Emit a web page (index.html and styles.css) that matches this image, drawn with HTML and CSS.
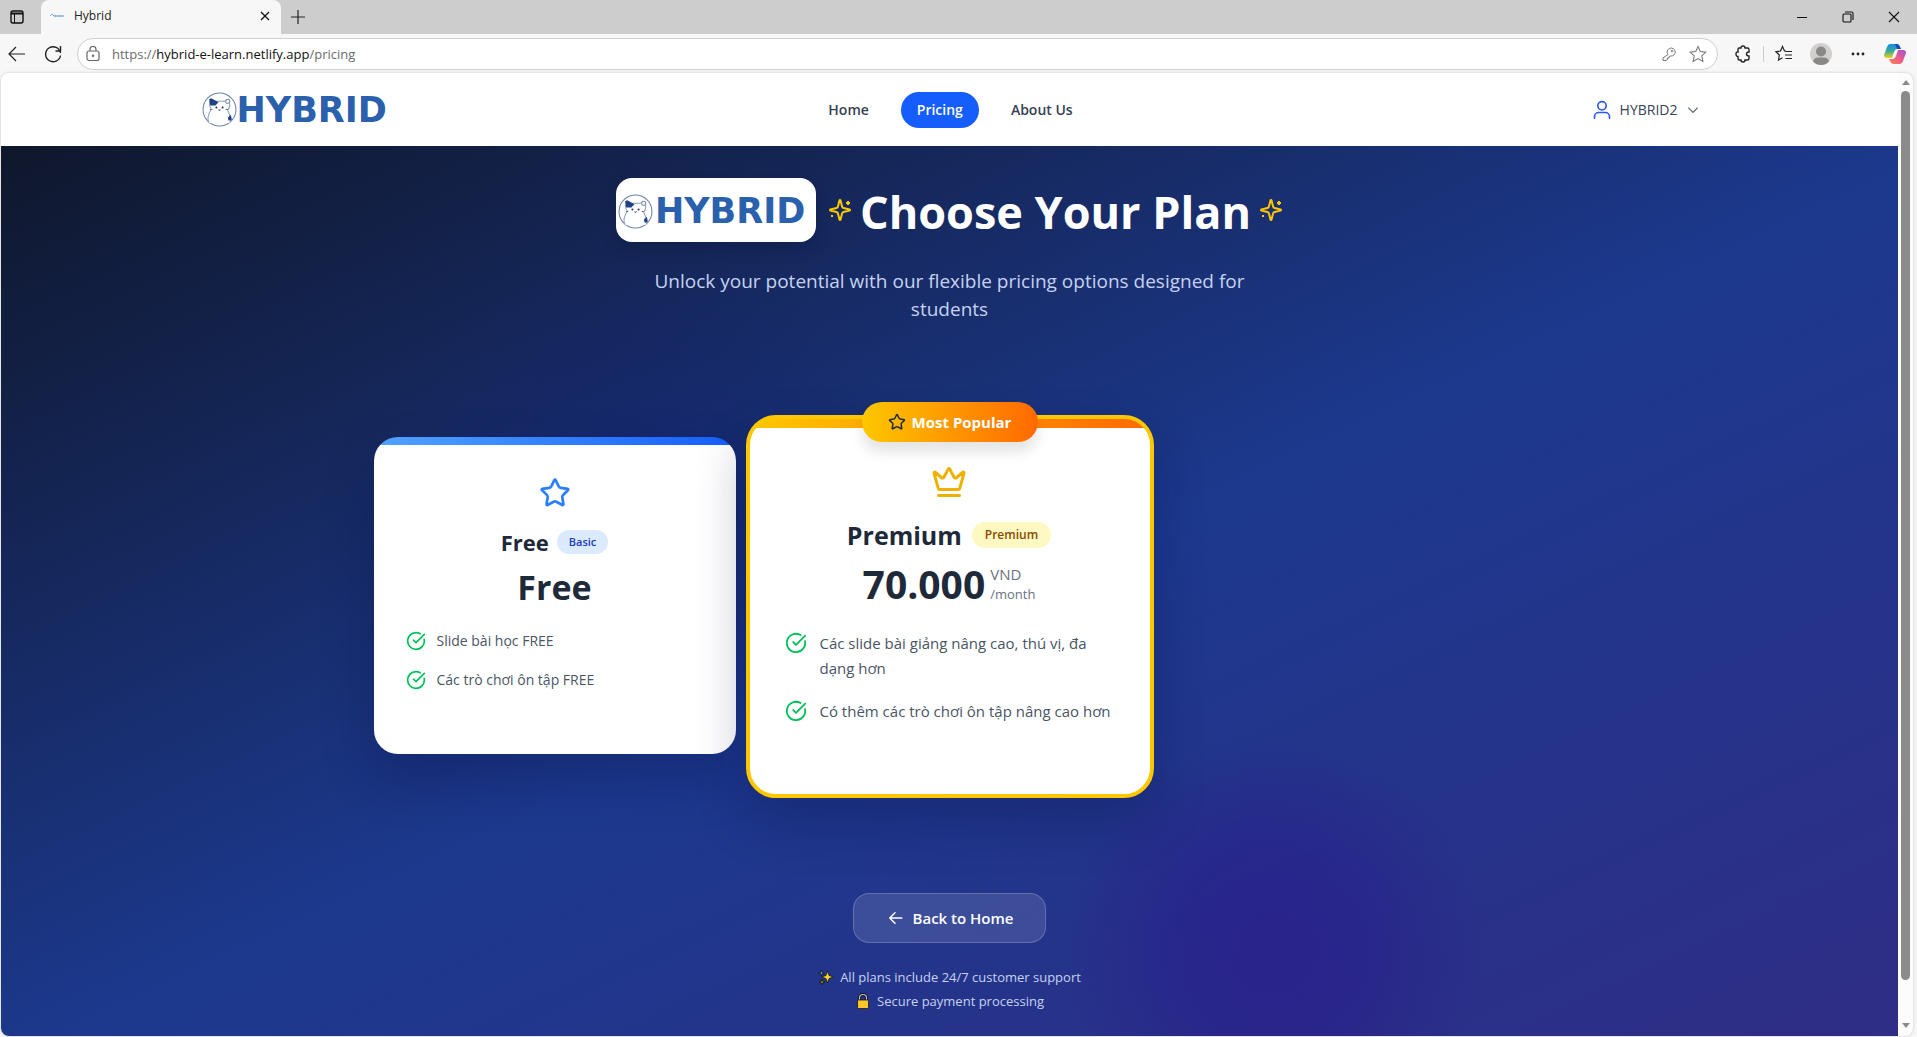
FILE: index.html
```html
<!DOCTYPE html>
<html lang="en">
<head>
<meta charset="utf-8">
<meta name="viewport" content="width=device-width, initial-scale=1">
<title>Hybrid</title>
<link rel="stylesheet" href="styles.css">
</head>
<body>
<svg class="sprite" aria-hidden="true">
  <symbol id="cat" viewBox="0 0 34 34">
    <circle cx="17" cy="17" r="16" fill="#fff" stroke="#6d82a8" stroke-width="1"/>
    <path d="M7 30C4 25 7 20 9 17C7 14 7 11 8 8L11 9H21L25 8C28 11 27 15 25 18C27 22 29 27 27 30" fill="#fff" stroke="#8b9bb8" stroke-width="1"/>
    <path d="M7 7L9 6L16 10L13 13L8 13Z" fill="#1d4287"/>
    <path d="M25 25L28 22L29 27L26 28Z" fill="#1d4287"/>
    <circle cx="25" cy="9" r="2" fill="#fff" stroke="#7e8ca5"/>
    <circle cx="14" cy="15" r="1" fill="#26344d"/><circle cx="20" cy="15" r="1" fill="#26344d"/>
    <path d="M16 17L17 18L18 17M8 17H10M23 17H25" fill="none" stroke="#5a6a86"/>
  </symbol>
  <symbol id="star" viewBox="0 0 24 24"><path d="M11.5 2.3a.53.53 0 0 1 .95 0l2.31 4.68a2.12 2.12 0 0 0 1.6 1.16l5.16.76a.53.53 0 0 1 .3.9l-3.74 3.64a2.12 2.12 0 0 0-.61 1.88l.88 5.14a.53.53 0 0 1-.77.56l-4.62-2.43a2.12 2.12 0 0 0-1.97 0L6.4 21.01a.53.53 0 0 1-.77-.56l.88-5.14a2.12 2.12 0 0 0-.61-1.88L2.16 9.8a.53.53 0 0 1 .3-.91l5.16-.75a2.12 2.12 0 0 0 1.6-1.16z"/></symbol>
  <symbol id="check" viewBox="0 0 24 24"><path d="M21.8 10A10 10 0 1 1 17 3.34"/><path d="m9 11 3 3L22 4"/></symbol>
  <symbol id="sparkles" viewBox="0 0 24 24"><path d="M9.94 15.5A2 2 0 0 0 8.5 14.06l-6.14-1.58a.5.5 0 0 1 0-.96L8.5 9.94A2 2 0 0 0 9.94 8.5l1.58-6.14a.5.5 0 0 1 .96 0l1.58 6.14a2 2 0 0 0 1.44 1.44l6.14 1.58a.5.5 0 0 1 0 .96l-6.14 1.58a2 2 0 0 0-1.44 1.44l-1.58 6.14a.5.5 0 0 1-.96 0z"/><path d="M20 3v4M22 5h-4M4 17v2M5 18H3"/></symbol>
</svg>

<div class="browser">
  <div class="tabstrip">
    <button class="icon-btn" aria-label="Tab actions"><svg width="16" height="16" viewBox="0 0 16 16"><rect x="2" y="2" width="12" height="12" rx="2" fill="none" stroke="#111" stroke-width="1.4"/><path d="M2 3.5H14V5.5H2Z" fill="#111"/><path d="M5.5 5V14" stroke="#111"/></svg></button>
    <div class="tab">
      <svg width="16" height="16" viewBox="0 0 16 16"><path d="M1 8L3 6L5 8" fill="none" stroke="#86aed8"/><path d="M5 8H15" stroke="#8ab2da" stroke-width="2" stroke-dasharray="2 .4"/></svg>
      <span class="tab-title">Hybrid</span>
      <button class="icon-btn" aria-label="Close tab"><svg width="10" height="10" viewBox="0 0 10 10"><path d="M1 1L9 9M9 1L1 9" stroke="#111" stroke-width="1.3"/></svg></button>
    </div>
    <button class="icon-btn new-tab" aria-label="New tab"><svg width="14" height="14" viewBox="0 0 14 14"><path d="M7 0V14M0 7H14" stroke="#222" stroke-width="1.2"/></svg></button>
    <div class="window-btns">
      <button class="icon-btn" aria-label="Minimize"><svg width="12" height="12" viewBox="0 0 12 12"><path d="M1 6.5H11" stroke="#111"/></svg></button>
      <button class="icon-btn" aria-label="Restore"><svg width="12" height="12" viewBox="0 0 12 12" fill="none" stroke="#111" stroke-width="1.1"><rect x="1" y="3" width="8" height="8" rx="1"/><path d="M3 1H9.5Q11 1 11 2.500V9"/></svg></button>
      <button class="icon-btn" aria-label="Close"><svg width="12" height="12" viewBox="0 0 12 12"><path d="M1 1L11 11M11 1L1 11" stroke="#111" stroke-width="1.1"/></svg></button>
    </div>
  </div>

  <div class="toolbar">
    <button class="icon-btn" aria-label="Back"><svg width="18" height="18" viewBox="0 0 18 18" fill="none" stroke="#222" stroke-width="1.2"><path d="M17 9H1.500M8 2L1 9L8 16"/></svg></button>
    <button class="icon-btn" aria-label="Refresh"><svg width="18" height="18" viewBox="0 0 18 18" fill="none" stroke="#222" stroke-width="1.4"><path d="M16.500 8A7.500 7.500 0 1 0 16.500 10.500"/><path d="M16.500 1V6H11.500"/></svg></button>
    <div class="address">
      <svg width="14" height="16" viewBox="0 0 14 16" fill="none" stroke="#666" stroke-width="1.2"><rect x="1" y="5" width="12" height="9.500" rx="2"/><path d="M4 5V3.500A3 3 0 0 1 10 3.500V5"/><circle cx="7" cy="9.700" r=".6" fill="#555"/></svg>
      <div class="url">https://<span class="host">hybrid-e-learn.netlify.app</span>/pricing</div>
      <button class="icon-btn" aria-label="Saved passwords"><svg width="16" height="16" viewBox="0 0 16 16" fill="none" stroke="#777"><path d="M7 8.500A4 4 0 1 1 9.500 10L8 10.500V12H6.500V13.500L5 14.500H2V12Z"/><circle cx="11" cy="5" r=".8"/></svg></button>
      <button class="icon-btn" aria-label="Add to favorites"><svg width="18" height="18" viewBox="0 0 24 24" fill="none" stroke="#777" stroke-width="1.400"><path d="M12 2L15 8.700L22.500 9.500L17 14.500L18.500 22L12 18.200L5.500 22L7 14.500L1.500 9.500L9 8.700Z"/></svg></button>
    </div>
    <div class="tools">
      <button class="icon-btn" aria-label="Extensions"><svg width="16" height="18" viewBox="0 0 16 18" fill="none" stroke="#222" stroke-width="1.400"><path d="M4 3H6Q6 1 8 1T10 3H12.500Q14 3 14 4.500V7Q11.500 7 11.500 9T14 11V13.500Q14 15 12.500 15H10Q10 17 8 17T6 15H4.500Q3 15 3 13.500V11.500Q1 11.500 1 9T3 7V4.500Q3 3 4 3Z"/></svg></button>
      <span class="divider"></span>
      <button class="icon-btn" aria-label="Favorites"><svg width="18" height="18" viewBox="0 0 18 18" fill="none" stroke="#222" stroke-width="1.200"><path d="M11 6L9.500 6L7.500 1.500L5.500 6L1 6.800L4.300 10L3.500 15L7.500 12.700M10.500 6.500H17M10 10H17M10.500 13.500H17"/></svg></button>
      <button class="icon-btn" aria-label="Profile"><svg width="22" height="22" viewBox="0 0 22 22"><circle cx="11" cy="11" r="11" fill="#d2d0ce"/><circle cx="11" cy="8.500" r="5" fill="#8a8886"/><path d="M3 18.500Q4 14.500 8 14.500H14Q18 14.500 19 18.500Q15.500 22 11 22T3 18.500Z" fill="#8a8886"/></svg></button>
      <button class="icon-btn" aria-label="Settings and more"><svg width="14" height="4" viewBox="0 0 14 4" fill="#222"><circle cx="2" cy="2" r="1.400"/><circle cx="7" cy="2" r="1.400"/><circle cx="12" cy="2" r="1.400"/></svg></button>
      <button class="icon-btn" aria-label="Copilot"><svg width="22" height="22" viewBox="0 0 22 22">
        <defs>
          <linearGradient id="cp1" x1="0" y1="0" x2="0" y2="1"><stop offset="0" stop-color="#1a8be8"/><stop offset=".5" stop-color="#35a99a"/><stop offset="1" stop-color="#f0cf20"/></linearGradient>
          <linearGradient id="cp2" x1="1" y1="0" x2="0" y2="1"><stop offset="0" stop-color="#a050e0"/><stop offset=".5" stop-color="#ee5a8a"/><stop offset="1" stop-color="#fb8a4a"/></linearGradient>
        </defs>
        <path d="M6 1H13Q15 1 16 4L17 6H13Q11 6 10 9L8 15H3Q0 15 0 12L3 4Q4 1 6 1Z" fill="url(#cp1)"/>
        <path d="M11 1H13Q15 1 16 4L17 6H13Z" fill="#1b49c4"/>
        <path d="M16 21H9Q7 21 6 18L5 16H9Q11 16 12 13L14 7H19Q22 7 22 10L19 18Q18 21 16 21Z" fill="url(#cp2)"/>
      </svg></button>
    </div>
  </div>

  <div class="viewport">
    <div class="page">
      <header class="site-header">
        <div class="header-inner">
          <a class="logo" href="#"><svg class="logo-cat"><use href="#cat"/></svg><span>HYBRID</span></a>
          <nav class="nav">
            <a href="#">Home</a>
            <a href="#" class="active">Pricing</a>
            <a href="#">About Us</a>
          </nav>
          <button class="user">
            <svg width="20" height="20" viewBox="0 0 24 24" fill="none" stroke="#2f5be8" stroke-width="2" stroke-linecap="round" stroke-linejoin="round"><path d="M21 22v-2a5 5 0 0 0-5-5H8a5 5 0 0 0-5 5v2"/><circle cx="12" cy="7" r="5"/></svg>
            <span>HYBRID2</span>
            <svg width="14" height="14" viewBox="0 0 24 24" fill="none" stroke="#555d69" stroke-width="2"><path d="m4 8 8 8 8-8"/></svg>
          </button>
        </div>
      </header>

      <main class="main">
        <section class="hero">
          <div class="hero-row">
            <div class="logo logo-card"><svg class="logo-cat"><use href="#cat"/></svg><span>HYBRID</span></div>
            <div class="hero-title">
              <svg class="sparkle"><use href="#sparkles"/></svg>
              <h1>Choose Your Plan</h1>
              <svg class="sparkle"><use href="#sparkles"/></svg>
            </div>
          </div>
          <p class="subtitle">Unlock your potential with our flexible pricing options designed for students</p>
        </section>

        <section class="plans">
          <article class="card free">
            <svg class="plan-icon"><use href="#star"/></svg>
            <div class="plan-head"><h2>Free</h2><span class="tag">Basic</span></div>
            <div class="price">Free</div>
            <ul class="features">
              <li><svg><use href="#check"/></svg><span>Slide bài học FREE</span></li>
              <li><svg><use href="#check"/></svg><span>Các trò chơi ôn tập FREE</span></li>
            </ul>
          </article>
          <article class="card premium">
            <div class="popular"><svg><use href="#star"/></svg><span>Most Popular</span></div>
            <svg class="plan-icon" viewBox="0 0 24 24"><path d="M11.560 3.270a.5.5 0 0 1 .880 0L15.390 8.870a1 1 0 0 0 1.520.290L21.180 5.500a.5.5 0 0 1 .800.520l-2.830 10.250a1 1 0 0 1-.960.730H5.810a1 1 0 0 1-.960-.730L2.020 6.020a.5.5 0 0 1 .800-.520l4.270 3.660a1 1 0 0 0 1.520-.290zM5 21h14"/></svg>
            <div class="plan-head"><h2>Premium</h2><span class="tag">Premium</span></div>
            <div class="price">70.000<span class="unit"><span>VND</span><small>/month</small></span></div>
            <ul class="features">
              <li><svg><use href="#check"/></svg><span>Các slide bài giảng nâng cao, thú vị, đa dạng hơn</span></li>
              <li><svg><use href="#check"/></svg><span>Có thêm các trò chơi ôn tập nâng cao hơn</span></li>
            </ul>
          </article>
        </section>

        <section class="closing">
          <button class="back"><svg width="18" height="18" viewBox="0 0 24 24" fill="none" stroke="#fff" stroke-width="2" stroke-linecap="round" stroke-linejoin="round"><path d="m12 19-7-7 7-7M21 12H5"/></svg>Back to Home</button>
          <p><svg width="16" height="16" viewBox="0 0 16 16"><path d="M9.500 2L11 6.500L15.500 8L11 9.500L9.500 14L8 9.500L3.500 8L8 6.500Z" fill="#ffd92e" stroke="#161616" stroke-width=".8"/><path d="M3.500 1L4.300 3.200L6.500 4L4.300 4.800L3.500 7L2.700 4.800L.5 4L2.700 3.200Z" fill="#3aa0c8" stroke="#161616" stroke-width=".8"/><path d="M4 10L4.800 12.200L7 13L4.800 13.800L4 16L3.200 13.800L1 13L3.200 12.200Z" fill="#9c8a2c" stroke="#161616" stroke-width=".8"/></svg>All plans include 24/7 customer support</p>
          <p><svg width="16" height="16" viewBox="0 0 16 16"><path d="M4.500 8V5A3.500 3.500 0 0 1 11.500 5V8" fill="none" stroke="#111" stroke-width="3"/><path d="M4.500 8V5A3.500 3.500 0 0 1 11.500 5V8" fill="none" stroke="#c4c8cc" stroke-width="1.200"/><rect x="2.500" y="7" width="11" height="8.500" rx="1" fill="#fdc52c" stroke="#161616" stroke-width=".8"/></svg>Secure payment processing</p>
        </section>
      </main>
    </div>
    <div class="scrollbar" aria-hidden="true"><i class="up"></i><i class="thumb"></i><i class="down"></i></div>
  </div>
</div>
</body>
</html>
```
FILE: styles.css
```css
* { box-sizing: border-box; }

body {
  margin: 0;
  background: #f7f7f7;
  color: #1e2939;
  font-family: "Open Sans", "Noto Sans", sans-serif;
  font-size: 14px;
  line-height: 20px;
}

h1, h2, p, ul { margin: 0; padding: 0; }
button { font: inherit; color: inherit; background: none; border: 0; padding: 0; }
a { color: inherit; text-decoration: none; }
svg { display: block; flex: none; }
.sprite { display: none; }

/* Browser frame */
.browser { display: flex; flex-direction: column; height: 100vh; }
.icon-btn { display: flex; align-items: center; justify-content: center; flex: none; }

.tabstrip { display: flex; align-items: center; height: 34px; padding-left: 9px; background: #cdcdcd; }
.tab {
  display: flex;
  align-items: center;
  align-self: stretch;
  gap: 9px;
  width: 240px;
  margin-left: 16px;
  padding: 0 11px 2px 8px;
  background: #f7f7f7;
  border-radius: 8px 8px 0 0;
}
.tab-title { flex: 1; color: #222; font-size: 12px; }
.new-tab { margin-left: 10px; }
.window-btns { display: flex; gap: 34px; margin-left: auto; padding-right: 17px; }

.toolbar { display: flex; align-items: center; height: 39px; padding: 0 11px 0 8px; gap: 18px; }
.address {
  display: flex;
  flex: 1;
  align-items: center;
  gap: 12px;
  height: 32px;
  margin: 0 -4px 0 -3px;
  padding: 0 10px 0 8px;
  background: #fff;
  border: 1px solid #cfcfcf;
  border-radius: 16px;
}
.url { flex: 1; color: #6b6b6b; font-size: 13px; }
.host { color: #111; }
.tools { display: flex; align-items: center; gap: 15px; }
.tools .icon-btn { min-width: 22px; }
.divider { width: 1px; height: 16px; background: #ccc; margin: 0 -6px; }

.viewport {
  display: flex;
  flex: 1;
  min-height: 0;
  margin: 0 4px 1px 1px;
  overflow: hidden;
  background: #fcfcfc;
  border-radius: 8px;
  box-shadow: 0 0 3px #c4c4c4;
}
.page { display: flex; flex: 1; flex-direction: column; min-width: 0; overflow: hidden; }
.scrollbar { display: flex; flex-direction: column; align-items: center; width: 15px; padding: 7px 0 8px; }
.up, .down { border: 4px solid transparent; }
.up { border-top: 0; border-bottom: 5px solid #8a8a8a; }
.down { border-bottom: 0; border-top: 5px solid #8a8a8a; }
.thumb { flex: 1; width: 9px; margin: 6px 0 43px; border-radius: 5px; background: #8b8b8b; }

/* Site header */
.site-header { flex: none; background: #fff; }
.header-inner {
  display: grid;
  grid-template-columns: 1fr auto 1fr;
  align-items: center;
  max-width: 1536px;
  height: 73px;
  margin: 0 auto;
  padding: 0 18px 0 20px;
}
.logo {
  display: flex;
  align-items: center;
  color: #2a60ac;
  font: bold 35px/42px "DejaVu Sans", sans-serif;
}
.logo-cat { width: 35px; height: 35px; }
.nav { display: flex; gap: 16px; color: #364153; font-weight: 600; }
.nav a { padding: 8px 16px; border-radius: 18px; }
.nav .active { background: #155dfc; color: #fff; }
.user { display: flex; align-items: center; justify-self: end; gap: 8px; color: #364153; }

/* Pricing page */
.main {
  flex: 1;
  min-height: 0;
  padding: 32px 16px 24px;
  background:
    radial-gradient(circle at 67% 90%, #2a1a8ca0, #2a1a8c80 90px, #2a1a8c00 210px),
    radial-gradient(circle at 34% 38%, #12207066, #12207000 240px),
    linear-gradient(to bottom right, #0f172b, #1c398e 52%, #312c85 104%);
}
.hero-row { display: flex; align-items: center; justify-content: center; gap: 12px; }
.logo-card {
  width: 200px;
  height: 64px;
  padding: 2px 0 0 2px;
  gap: 2px;
  background: #fff;
  border-radius: 16px;
  box-shadow: 0 8px 14px #0b153c4d;
}
.hero-title { display: flex; align-items: center; gap: 8px; }
h1 { padding-top: 3px; color: #fff; font-size: 45px; line-height: 48px; font-weight: 700; }
.sparkle { width: 24px; height: 24px; fill: none; stroke: #fdc700; stroke-width: 2; }
.subtitle {
  max-width: 640px;
  margin: 25px auto 0;
  color: #c6d2f0;
  font-size: 19px;
  line-height: 28px;
  text-align: center;
}

.plans {
  display: grid;
  grid-template-columns: 362fr 408fr 362fr;
  align-items: start;
  gap: 10px;
  max-width: 1152px;
  margin: 92px auto 0;
}
.card { background: #fff; box-shadow: 0 25px 50px #0b10484d; }
.plan-icon { display: block; margin: 0 auto; fill: none; stroke-width: 2; stroke-linejoin: round; stroke-linecap: round; }
.plan-head { display: flex; align-items: center; justify-content: center; }
.tag { font-weight: 600; border-radius: 13px; }
.price { display: flex; align-items: center; justify-content: center; font-weight: 700; }
.features { display: grid; list-style: none; color: #4a5565; }
.features li { display: flex; align-items: flex-start; }
.features svg { fill: none; stroke: #00c05a; stroke-width: 2; stroke-linecap: round; stroke-linejoin: round; }

.free {
  height: 317px;
  margin-top: 22px;
  padding: 40px 32px;
  border-radius: 24px;
  background: linear-gradient(to right, #51a2ff, #155dfc) top / 100% 8px no-repeat, #fff;
}
.free .plan-icon { width: 32px; height: 32px; stroke: #2b7fff; }
.free .plan-head { gap: 8px; margin-top: 17px; }
.free h2 { font-size: 22px; line-height: 32px; }
.free .tag { padding: 2px 12px; background: #dbeafe; color: #193cb8; font-size: 11px; }
.free .price { margin-top: 9px; font-size: 34px; line-height: 40px; }
.free .features { gap: 19px; margin-top: 24px; }
.free .features li { gap: 11px; }
.free .features svg { width: 20px; height: 20px; }

.premium {
  position: relative;
  height: 383px;
  padding: 45px 36px 36px 35px;
  border: 4px solid #fdc700;
  border-radius: 30px;
  background: linear-gradient(to right, #fdc700, #ff6900) top / 100% 9px no-repeat, #fff;
}
.popular {
  position: absolute;
  top: -17px;
  left: 50%;
  display: flex;
  align-items: center;
  justify-content: center;
  gap: 6px;
  width: 176px;
  height: 40px;
  transform: translateX(-50%);
  border-radius: 20px;
  background: linear-gradient(to right, #fdc700, #ff6900);
  box-shadow: 0 10px 14px #0000001c;
  color: #fff;
  font-size: 15px;
  font-weight: 700;
}
.popular svg { width: 18px; height: 18px; fill: none; stroke: #1e2939; stroke-width: 2; }
.premium .plan-icon { width: 36px; height: 36px; stroke: #efb100; }
.premium .plan-head { gap: 10px; margin-top: 16px; }
.premium h2 { font-size: 25px; line-height: 38px; }
.premium .tag { padding: 3px 13px; background: #fef9c2; color: #894b00; font-size: 12px; }
.premium .price { gap: 5px; margin-top: 7px; font-size: 39px; line-height: 46px; }
.unit { display: grid; color: #6a7282; font-size: 15px; line-height: 20px; font-weight: 400; }
.unit small { font-size: 13px; }
.premium .features { gap: 18px; margin-top: 24px; font-size: 15px; line-height: 25px; }
.premium .features li { gap: 13px; }
.premium .features svg { width: 22px; height: 22px; margin-top: 1px; }

.closing {
  display: flex;
  flex-direction: column;
  align-items: center;
  margin-top: 95px;
  color: #c6d2f0;
}
.back {
  display: flex;
  align-items: center;
  justify-content: center;
  gap: 9px;
  height: 50px;
  margin-bottom: 22px;
  padding: 0 32px;
  border: 1px solid #ffffff33;
  border-radius: 16px;
  background: #ffffff1f;
  color: #fff;
  font-size: 15px;
  font-weight: 600;
}
.closing p { display: flex; align-items: center; gap: 6px; line-height: 24px; font-size: 13px; }
```
